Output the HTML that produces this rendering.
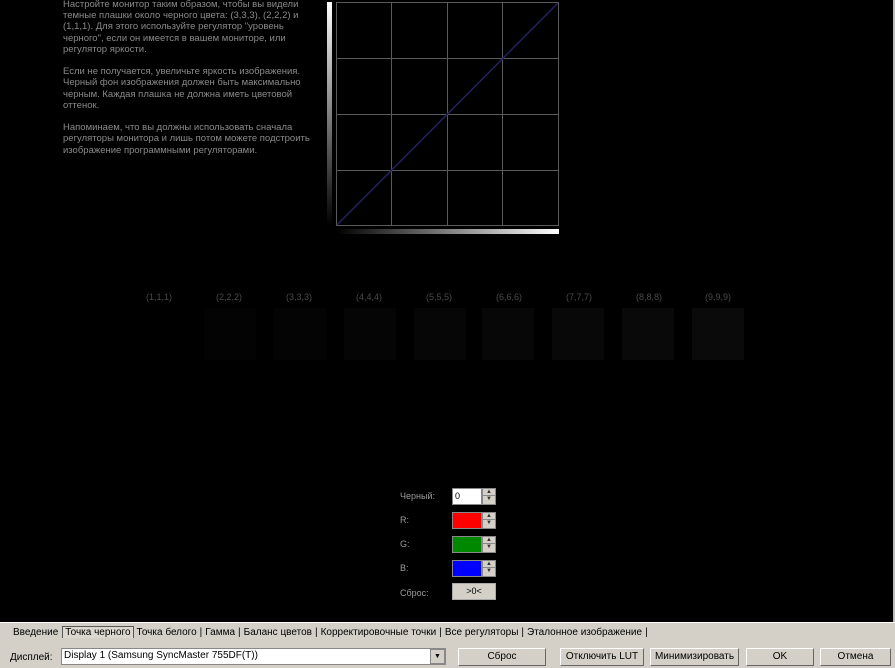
<!DOCTYPE html>
<html><head><meta charset="utf-8"><style>
*{margin:0;padding:0;box-sizing:border-box}
body{width:895px;height:668px;background:#000;position:relative;overflow:hidden;font-family:"Liberation Sans",sans-serif}
.a{position:absolute}
.txt{left:63px;top:-1px;color:#8a8a8a;font-size:9.5px;line-height:11.2px;white-space:nowrap}
.txt p{margin-bottom:11.2px}
.lbl{color:#4a4a4a;font-size:9px;width:60px;text-align:center}
.sw{width:52px;height:52px;top:308px}
.cl{color:#9a9a9a;font-size:9px;left:400px}
.box{left:452px;width:30px;height:17px;border:1px solid #888;font-size:9px;padding:2px 2px;color:#000}
.sp{left:482px;width:14px;height:17px;background:#d4d0c8;border:1px solid #888}
.sp div{height:7px;border-bottom:1px solid #888;font-size:6px;text-align:center;line-height:7px;color:#333}
.btn{top:648px;height:18px;background:#d4d0c8;border:1px solid #fff;border-right-color:#666;border-bottom-color:#666;font-size:10px;text-align:center;line-height:16px;color:#000}
</style></head><body>
<div class="a txt">
<p>Настройте монитор таким образом, чтобы вы видели<br>темные плашки около черного цвета: (3,3,3), (2,2,2) и<br>(1,1,1). Для этого используйте регулятор "уровень<br>черного", если он имеется в вашем мониторе, или<br>регулятор яркости.</p>
<p>Если не получается, увеличьте яркость изображения.<br>Черный фон изображения должен быть максимально<br>черным. Каждая плашка не должна иметь цветовой<br>оттенок.</p>
<p>Напоминаем, что вы должны использовать сначала<br>регуляторы монитора и лишь потом можете подстроить<br>изображение программными регуляторами.</p>
</div>
<div class="a" style="left:327px;top:2px;width:5px;height:224px;background:linear-gradient(#fff,#000)"></div>
<div class="a" style="left:336px;top:229px;width:223px;height:5px;background:linear-gradient(90deg,#000,#fff)"></div>
<svg class="a" style="left:335px;top:1px" width="225" height="226">
<g stroke="#5a5a5a" stroke-width="1" fill="none">
<rect x="1.5" y="1.5" width="222" height="223"/>
<line x1="56.5" y1="1" x2="56.5" y2="225"/><line x1="112.5" y1="1" x2="112.5" y2="225"/><line x1="167.5" y1="1" x2="167.5" y2="225"/>
<line x1="1" y1="57.5" x2="224" y2="57.5"/><line x1="1" y1="113.5" x2="224" y2="113.5"/><line x1="1" y1="169.5" x2="224" y2="169.5"/>
</g>
<line x1="2" y1="224" x2="223" y2="2" stroke="#23235a" stroke-width="1.5"/>
</svg>
<div class="a lbl" style="left:129px;top:292px">(1,1,1)</div>
<div class="a lbl" style="left:199px;top:292px">(2,2,2)</div>
<div class="a lbl" style="left:269px;top:292px">(3,3,3)</div>
<div class="a lbl" style="left:339px;top:292px">(4,4,4)</div>
<div class="a lbl" style="left:409px;top:292px">(5,5,5)</div>
<div class="a lbl" style="left:479px;top:292px">(6,6,6)</div>
<div class="a lbl" style="left:549px;top:292px">(7,7,7)</div>
<div class="a lbl" style="left:619px;top:292px">(8,8,8)</div>
<div class="a lbl" style="left:688px;top:292px">(9,9,9)</div>
<div class="a sw" style="left:133px;background:#000"></div>
<div class="a sw" style="left:204px;background:#030303"></div>
<div class="a sw" style="left:274px;background:#040404"></div>
<div class="a sw" style="left:344px;background:#050505"></div>
<div class="a sw" style="left:414px;background:#060606"></div>
<div class="a sw" style="left:482px;background:#070707"></div>
<div class="a sw" style="left:552px;background:#080808"></div>
<div class="a sw" style="left:622px;background:#090909"></div>
<div class="a sw" style="left:692px;background:#0a0a0a"></div>
<div class="a cl" style="top:491px">Черный:</div>
<div class="a cl" style="top:515px">R:</div>
<div class="a cl" style="top:539px">G:</div>
<div class="a cl" style="top:563px">B:</div>
<div class="a cl" style="top:588px">Сброс:</div>
<div class="a box" style="top:488px;background:#fff">0</div>
<div class="a box" style="top:512px;background:#f00"></div>
<div class="a box" style="top:536px;background:#080"></div>
<div class="a box" style="top:560px;background:#00f"></div>
<div class="a sp" style="top:488px"><div>▲</div><div style="border:0">▼</div></div>
<div class="a sp" style="top:512px"><div>▲</div><div style="border:0">▼</div></div>
<div class="a sp" style="top:536px"><div>▲</div><div style="border:0">▼</div></div>
<div class="a sp" style="top:560px"><div>▲</div><div style="border:0">▼</div></div>
<div class="a" style="left:452px;top:583px;width:44px;height:17px;background:#d4d0c8;border:1px solid #aaa;font-size:9px;text-align:center;line-height:15px">&gt;0&lt;</div>
<div class="a" style="left:893px;top:0;width:2px;height:622px;background:#bbb"></div>
<div class="a" style="left:0;top:622px;width:895px;height:46px;background:#d4d0c8;border-top:1px solid #fff"></div>
<div class="a" style="left:0;top:626px;font-size:10px;line-height:14px;color:#000;white-space:nowrap">
<span style="padding:0 4px 0 13px">Введение</span><span style="border:1px solid #555;border-bottom:0;background:#dcd8d0;padding:0 2px">Точка черного</span><span style="padding:0 3px">Точка белого</span>|<span style="padding:0 3px">Гамма</span>|<span style="padding:0 3px">Баланс цветов</span>|<span style="padding:0 3px">Корректировочные точки</span>|<span style="padding:0 3px">Все регуляторы</span>|<span style="padding:0 3px">Эталонное изображение</span>|</div>
<div class="a" style="left:10px;top:652px;font-size:10px">Дисплей:</div>
<div class="a" style="left:61px;top:648px;width:385px;height:17px;background:#fff;border:1px solid #888;font-size:10px;padding:1px 2px">Display 1 (Samsung SyncMaster 755DF(T))</div>
<div class="a" style="left:430px;top:649px;width:15px;height:15px;background:#d4d0c8;border:1px solid #888;font-size:7px;text-align:center;line-height:13px">▼</div>
<div class="a btn" style="left:458px;width:88px">Сброс</div>
<div class="a btn" style="left:560px;width:84px">Отключить LUT</div>
<div class="a btn" style="left:650px;width:89px">Минимизировать</div>
<div class="a btn" style="left:746px;width:68px">OK</div>
<div class="a btn" style="left:820px;width:71px">Отмена</div>
</body></html>
